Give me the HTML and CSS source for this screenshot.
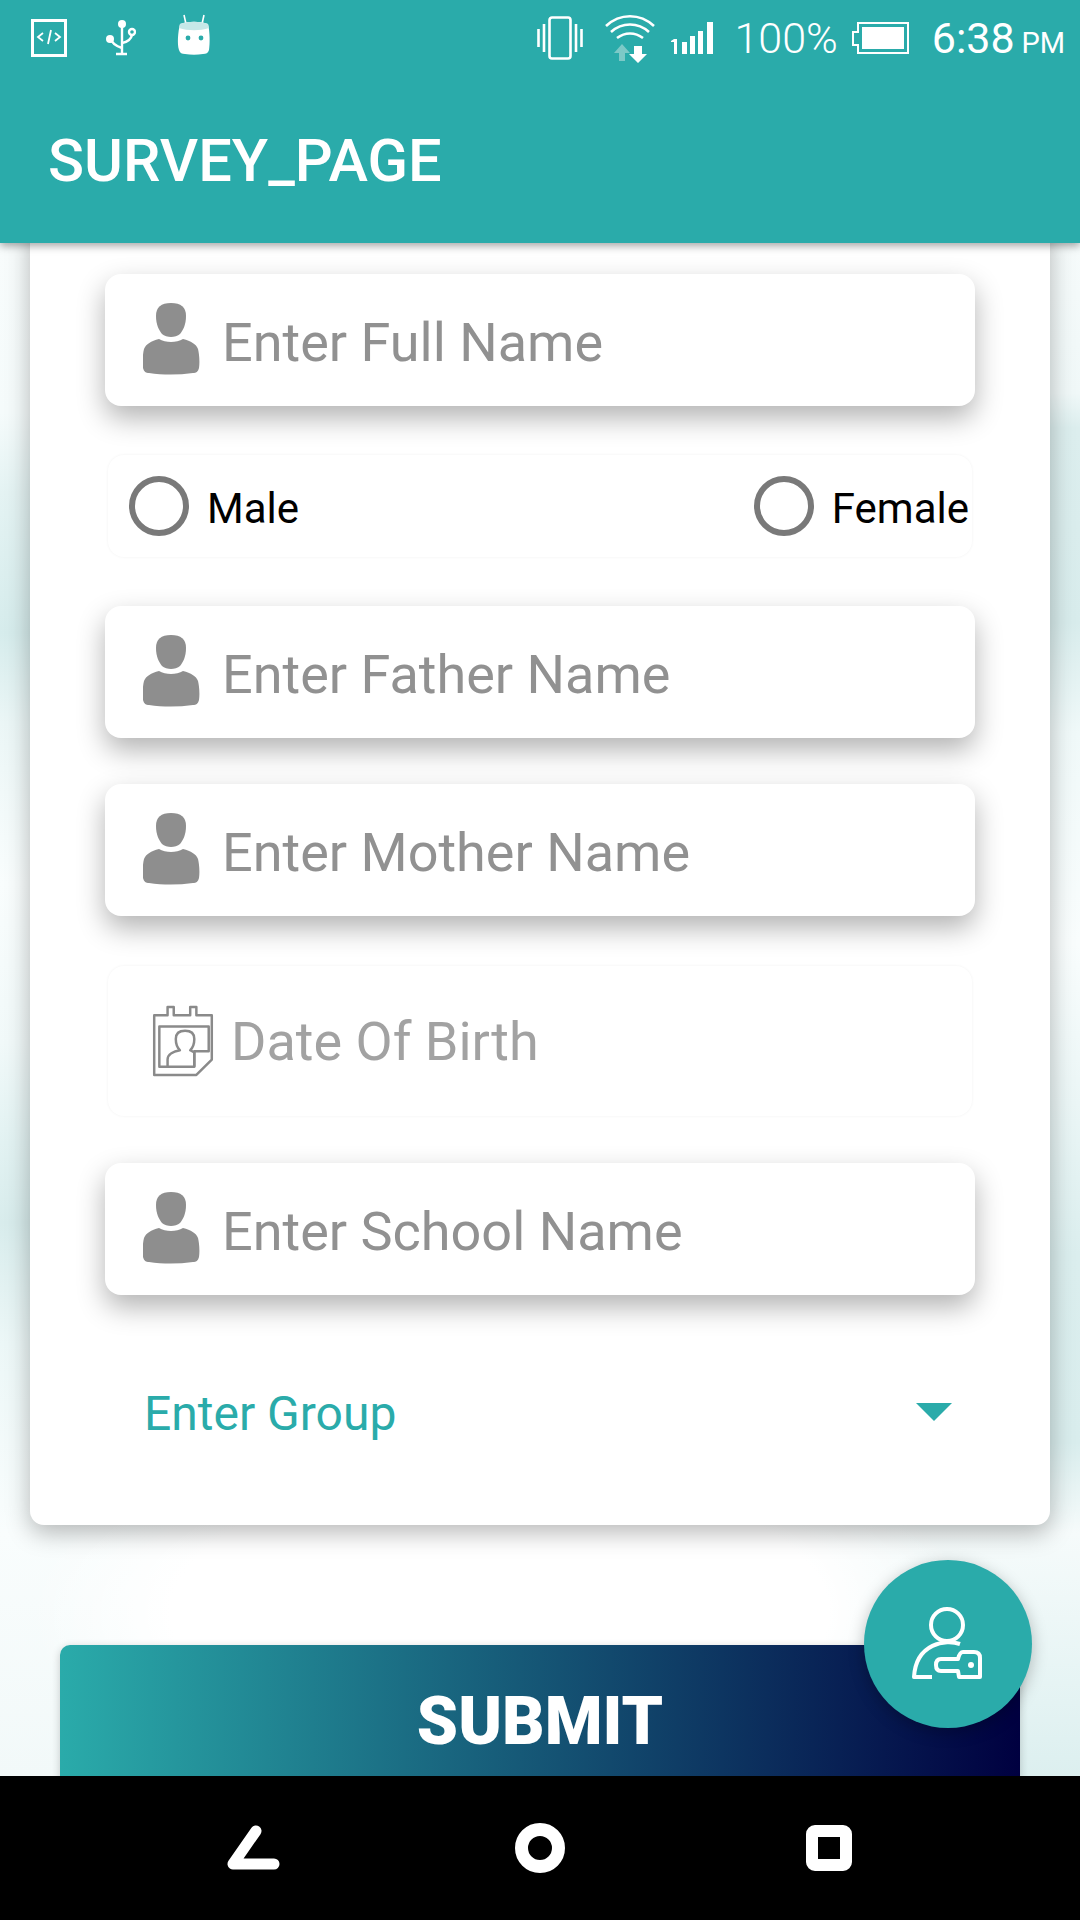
FILE: index.html
```html
<!DOCTYPE html>
<html lang="en">
<head>
    <meta charset="UTF-8">
    <meta name="viewport" content="width=device-width, initial-scale=1.0">
    <title>Survey Page</title>
    <link rel="stylesheet" href="styles.css">
</head>
<body>
    <svg class="defs" width="0" height="0">
        <symbol id="person" viewBox="0 0 58 72">
            <path d="M28 0c10 0 15 4 15 13 0 9-3 14-6 18-2 2-6 3-9 3s-7-1-9-3c-3-4-6-9-6-18C13 4 18 0 28 0z"/>
            <path d="M16 36c3 2 8 3 12 3s9-1 12-3c8 2 13 5 15 10 1 4 2 12 1 19-1 4-3 5-6 5-15 2-30 2-44 0-3 0-5-1-6-5-1-7 0-15 1-19 2-5 7-8 15-10z"/>
        </symbol>
    </svg>

    <header class="app-header">
        <div class="status-bar">
            <div class="status-left">
                <svg class="icon-code" width="38" height="38" viewBox="0 0 38 38"><rect x="1.500" y="1.500" width="33" height="35" fill="none" stroke="#fff" stroke-width="3"/><path d="M12 14l-5 4 5 4M24 14l5 4-5 4M20 11l-3 14" fill="none" stroke="#fff" stroke-width="1.800"/></svg>
                <svg class="icon-usb" width="30" height="38" viewBox="0 0 30 38"><g fill="none" stroke="#fff" stroke-width="2.400"><path d="M16 6v30M10 35h11"/><path d="M5 20c1 5 5 7 11 9"/><path d="M16 24c5-1 9-3 10-8"/><circle cx="26" cy="13" r="3"/></g><circle cx="16" cy="5" r="4" fill="#fff"/><circle cx="4" cy="20" r="4" fill="#fff"/></svg>
                <svg class="icon-bot" width="34" height="42" viewBox="0 0 34 42"><path d="M7 1l2 9M27 1l-2 9" stroke="#fff" stroke-width="1.600" fill="none"/><path d="M3 10c8-3 20-3 28 0 2 8 2 20 1 26-1 3-3 4-6 4-6 1-12 1-18 0-3 0-5-1-6-4C0 30 1 18 3 10z" fill="#fff"/><path d="M3 10c8-3 20-3 28 0l1 4c-9 3-21 3-30 0z" fill="#c6e8e8"/><circle cx="11" cy="24" r="2.400" fill="#2aabaa"/><circle cx="24" cy="24" r="2.400" fill="#2aabaa"/></svg>
            </div>
            <div class="status-right">
                <svg width="46" height="44" viewBox="0 0 46 44"><rect x="12.500" y="1.500" width="21" height="41" rx="2.500" fill="none" stroke="#fff" stroke-width="2.600"/><path d="M1.500 13v18M7 8v28M39 8v28M44.500 13v18" stroke="#fff" stroke-width="2.600"/></svg>
                <svg class="icon-wifi" width="52" height="50" viewBox="0 0 52 50"><g fill="none" stroke="#fff" stroke-width="2.600"><path d="M2 13c14-13 34-13 48 0"/><path d="M7 19c11-10 27-10 38 0"/><path d="M13 25c8-6 18-6 26 0"/></g><path d="M18 31l8 9h-5v8h-6v-8h-5z" fill="#7cc9c7"/><path d="M30 33h8v8h5l-9 9-9-9h5z" fill="#fff"/></svg>
                <svg class="icon-signal" width="44" height="32" viewBox="0 0 44 32"><path d="M0 19l3-2h3v15H3V20H0zM11 20h5v12h-5zM19 14h5v18h-5zM27 9h5v23h-5zM36 0h6v32h-6z" fill="#fff"/></svg>
                <span class="battery-text">100%</span>
                <svg class="icon-battery" width="57" height="32" viewBox="0 0 57 32"><path d="M6 1h50v30H6v-8H1v-13h5z" fill="none" stroke="#fff" stroke-width="2"/><rect x="10" y="5" width="42" height="22" fill="#fff"/><path d="M6 14h4v2H6z" fill="#2aabaa"/></svg>
                <span class="clock">6:38 <small>PM</small></span>
            </div>
        </div>
        <div class="toolbar">SURVEY_PAGE</div>
    </header>

    <main class="content">
        <form class="card">
            <div class="field">
                <svg class="field-icon"><use href="#person"/></svg>
                <span class="placeholder">Enter Full Name</span>
            </div>

            <div class="gender-row">
                <label class="radio"><span class="radio-dot"></span><span class="radio-text">Male</span></label>
                <label class="radio"><span class="radio-dot"></span><span class="radio-text">Female</span></label>
            </div>

            <div class="field">
                <svg class="field-icon"><use href="#person"/></svg>
                <span class="placeholder">Enter Father Name</span>
            </div>

            <div class="field field-mother">
                <svg class="field-icon"><use href="#person"/></svg>
                <span class="placeholder">Enter Mother Name</span>
            </div>

            <div class="date-row">
                <svg class="date-icon" width="64" height="72" viewBox="0 0 62 70"><g fill="none" stroke="#8a8a8a" stroke-width="2.400" stroke-linejoin="round"><path d="M3 10h13V2h6v8h16V2h6v8h15v43L44 68H3z"/><path d="M8 21h48v24H42v15H8z"/><path d="M16 60v-7c0-5 6-8 12-9-3-3-4-7-4-11 0-5 3-8 9-8s9 3 9 8c0 4-1 8-4 11l4 2v14"/></g></svg>
                <span class="placeholder placeholder-light">Date Of Birth</span>
            </div>

            <div class="field">
                <svg class="field-icon"><use href="#person"/></svg>
                <span class="placeholder">Enter School Name</span>
            </div>

            <div class="group-select">
                <span>Enter Group</span>
                <span class="caret"></span>
            </div>
        </form>

        <button class="submit-btn" type="button">SUBMIT</button>

        <a class="fab" href="#">
            <svg width="74" height="74" viewBox="0 0 74 74" fill="none" stroke="#fff" stroke-width="4" stroke-linejoin="round"><circle cx="36" cy="18" r="16"/><path d="M49 37c-14-5-44-1-46 33h18"/><path d="M47 52H30c-3 0-5 2-5 6s2 6 5 6h17l1 6h21V51c0-4-2-6-6-6H52c-3 0-4 3-5 7z"/><circle cx="60" cy="58" r="3" fill="#fff" stroke="none"/></svg>
        </a>
    </main>

    <nav class="nav-bar">
        <svg width="54" height="46" viewBox="0 0 54 46"><path d="M30 6L7 39h41" fill="none" stroke="#fff" stroke-width="11" stroke-linecap="round" stroke-linejoin="round"/></svg>
        <svg width="50" height="50" viewBox="0 0 50 50"><circle cx="25" cy="25" r="18.500" fill="none" stroke="#fff" stroke-width="13"/></svg>
        <svg class="nav-square" width="46" height="46" viewBox="0 0 46 46"><rect x="6" y="6" width="34" height="34" rx="3" fill="none" stroke="#fff" stroke-width="12"/></svg>
    </nav>
</body>
</html>
```

FILE: styles.css
```css
* {
    margin: 0;
    padding: 0;
    box-sizing: border-box;
}

body {
    width: 1080px;
    height: 1920px;
    display: flex;
    flex-direction: column;
    overflow: hidden;
    font-family: Roboto, sans-serif;
    background-color: #fff;
}

.defs {
    position: absolute;
}

/* Header */
.app-header {
    height: 243px;
    flex-shrink: 0;
    background-color: #2aabaa;
    color: #fff;
    box-shadow: 0 3px 8px rgba(0, 0, 0, 0.35);
    z-index: 2;
}

.status-bar {
    height: 76px;
    padding: 0 15px 0 31px;
    display: flex;
    justify-content: space-between;
    align-items: center;
}

.status-left,
.status-right {
    display: flex;
    align-items: center;
}

.icon-usb {
    margin-left: 37px;
}

.icon-bot {
    margin-left: 41px;
    margin-top: -6px;
}

.icon-wifi {
    margin-left: 21px;
}

.icon-signal {
    margin-left: 15px;
}

.battery-text {
    margin-left: 19px;
    font-size: 43px;
    font-weight: 300;
}

.icon-battery {
    margin-left: 14px;
}

.clock {
    margin-left: 23px;
    font-size: 43px;
    word-spacing: -4px;
}

.clock small {
    font-size: 29px;
}

.toolbar {
    padding: 39px 0 0 48px;
    font-size: 59.500px;
    font-weight: 500;
    line-height: 92px;
}

/* Page body, two strips of pale marble show at the sides */
.content {
    position: relative;
    flex: 1;
    overflow: hidden;
    background-color: #fff;
    background-image:
        radial-gradient(ellipse 470px 200px at 500px 1370px, #fff 70%, rgba(255, 255, 255, 0) 100%),
        linear-gradient(180deg, #f8fcfc 0, #f5fbfb 170px, #e4f3f3 250px, #d6ecec 390px, #ebf6f6 480px, #f9fdfd 640px, #f1f9f9 800px, #e2f2f2 900px, #d8ecec 980px, #ecf7f7 1100px, #f9fdfd 1290px, #f2f9f9 1533px),
        linear-gradient(180deg, #f6fbfb 0, #f0f8f8 150px, #dceeee 185px, #d8ecec 380px, #f0f9f9 490px, #f9fdfd 700px, #ebf6f6 860px, #dbeeee 1010px, #d9eded 1200px, #f6fbfb 1290px, #e6f4f4 1440px, #dcefef 1533px);
    background-size: 100% 100%, 50% 100%, 50% 100%;
    background-position: 0 0, 0 0, 100% 0;
    background-repeat: no-repeat;
}

.card {
    height: 1307px;
    margin: -25px 30px 0;
    padding: 56px 75px 0;
    background-color: #fff;
    border-radius: 14px;
    box-shadow: 0 8px 24px rgba(0, 0, 0, 0.28);
}

.field {
    height: 132px;
    padding-left: 38px;
    display: flex;
    align-items: center;
    background-color: #fff;
    border-radius: 16px;
    box-shadow: 0 12px 28px rgba(0, 0, 0, 0.3);
}

.field-mother {
    margin-top: 46px;
}

.field-icon {
    width: 58px;
    height: 72px;
    margin-top: -2px;
    fill: #8e8e8e;
    filter: blur(0.5px);
}

.placeholder {
    margin-left: 21px;
    margin-top: 4px;
    font-size: 54px;
    color: #919191;
}

.placeholder-light {
    margin-left: 16px;
    margin-top: 0;
    color: #a2a2a2;
}

.gender-row {
    height: 102px;
    margin: 49px 3px;
    padding: 0 3px 0 21px;
    display: flex;
    justify-content: space-between;
    align-items: center;
    border-radius: 16px;
    box-shadow: 0 0 3px rgba(0, 0, 0, 0.06);
}

.radio {
    display: flex;
    align-items: center;
    font-size: 42px;
    color: #000;
}

.radio-dot {
    width: 60px;
    height: 60px;
    margin-right: 18px;
    border: 6px solid #797979;
    border-radius: 50%;
}

.radio-text {
    margin-top: 4px;
}

.date-row {
    height: 150px;
    margin: 50px 3px 47px;
    padding: 0 0 0 43px;
    display: flex;
    align-items: center;
    border-radius: 16px;
    box-shadow: 0 0 3px rgba(0, 0, 0, 0.06);
}

.group-select {
    margin-top: 90px;
    padding: 0 23px 0 39px;
    display: flex;
    justify-content: space-between;
    align-items: center;
    font-size: 48px;
    color: #2aabaa;
}

.caret {
    width: 0;
    height: 0;
    margin-top: -3px;
    border-left: 18px solid transparent;
    border-right: 18px solid transparent;
    border-top: 18px solid #2aabaa;
}

.submit-btn {
    display: block;
    width: 960px;
    height: 180px;
    margin: 120px 0 0 60px;
    padding-bottom: 28px;
    border: none;
    border-radius: 10px;
    background: linear-gradient(90deg, #2aabaa 0%, #000040 100%);
    color: #fff;
    font-family: Roboto, sans-serif;
    font-size: 66px;
    font-weight: 900;
    box-shadow: 0 2px 8px rgba(0, 0, 0, 0.2);
}

.fab {
    position: absolute;
    left: 864px;
    top: 1317px;
    width: 168px;
    height: 168px;
    display: flex;
    align-items: center;
    justify-content: center;
    border-radius: 50%;
    background-color: #2aabaa;
    box-shadow: 0 4px 16px rgba(0, 0, 0, 0.25);
}

/* Bottom navigation */
.nav-bar {
    height: 144px;
    flex-shrink: 0;
    padding-left: 226px;
    display: flex;
    align-items: center;
    gap: 235px;
    background-color: #000;
    z-index: 2;
}

.nav-square {
    margin-left: 6px;
}
```
